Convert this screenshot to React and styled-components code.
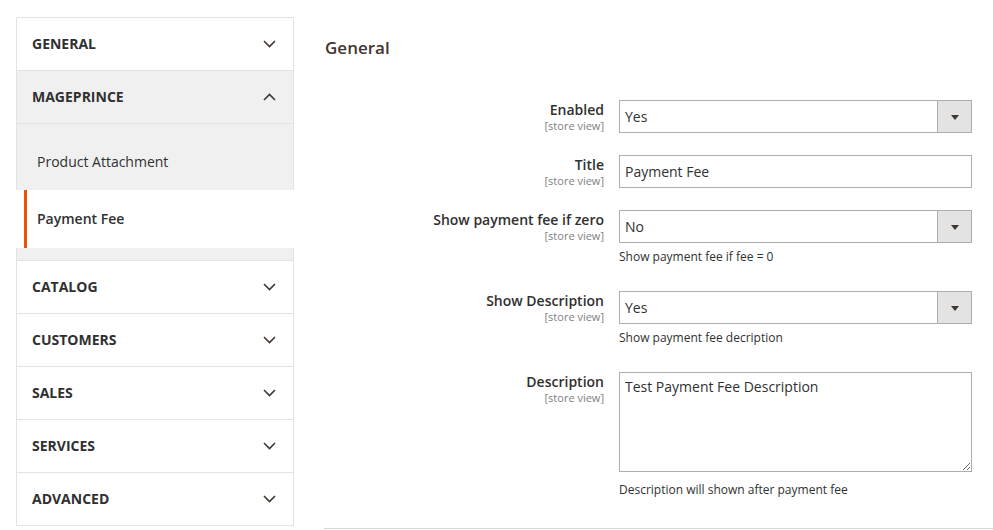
import React from "react";
import styled, { createGlobalStyle } from "styled-components";

const Global = createGlobalStyle`
  html, body { margin: 0; padding: 0; background: #fff; }
  body { font-family: "Open Sans", "Liberation Sans", sans-serif; color: #303030; }
  * { box-sizing: border-box; }
`;

const Page = styled.div`
  display: flex;
  align-items: flex-start;
  gap: 30px;
  padding: 17px 0 0 16px;
`;

const Nav = styled.nav`
  width: 278px;
  flex: none;
  border: 1px solid #e3e3e3;
  border-bottom: none;
`;

const NavTitle = styled.div`
  height: 53px;
  display: flex;
  align-items: center;
  justify-content: space-between;
  padding: 0 17px 1px 15px;
  border-bottom: 1px solid #e3e3e3;
  background: ${(p) => (p.$open ? "#f0f0f0" : "#fff")};
  font-size: 14px;
  font-weight: 700;
  text-transform: uppercase;
  color: #303030;
  cursor: pointer;
`;

const TitleText = styled.span`
  margin-bottom: 1px;
`;

const SubList = styled.ul`
  list-style: none;
  margin: 0;
  padding: 9px 0 12px;
  background: #f0f0f0;
  border-bottom: 1px solid #e3e3e3;
`;

const SubItem = styled.li`
  position: relative;
  display: flex;
  align-items: center;
  height: ${(p) => (p.$active ? "58px" : "57px")};
  padding-left: ${(p) => (p.$active ? "21px" : "20px")};
  padding-bottom: ${(p) => (p.$active ? "2px" : "0")};
  margin: ${(p) => (p.$active ? "0 -1px" : "0")};
  background: ${(p) => (p.$active ? "#fff" : "transparent")};
  font-size: 14px;
  font-weight: ${(p) => (p.$active ? 600 : 400)};
  color: #303030;
  &::before {
    content: "";
    display: ${(p) => (p.$active ? "block" : "none")};
    position: absolute;
    left: 8px;
    top: 0;
    bottom: 0;
    width: 3px;
    background: #eb5202;
  }
`;

const Main = styled.main`
  flex: 1;
  padding-top: 19px;
`;

const Heading = styled.h2`
  margin: 0 0 40px 1px;
  font-size: 17px;
  line-height: 24px;
  font-weight: 600;
  color: #41362f;
`;

const Fieldset = styled.div`
  padding-bottom: 3px;
  border-bottom: 1px solid #d6d6d6;
`;

const Row = styled.div`
  display: grid;
  grid-template-columns: 280px 353px;
  column-gap: 15px;
  padding-bottom: 22px;
`;

const LabelCell = styled.div`
  text-align: right;
  padding-top: 1px;
`;

const Label = styled.label`
  display: block;
  font-size: 14px;
  line-height: 18px;
  font-weight: 600;
  color: #303030;
`;

const Scope = styled.div`
  font-size: 11px;
  line-height: 13px;
  color: #808080;
`;

const Control = styled.div`
  display: flex;
  flex-direction: column;
`;

const SelectBox = styled.div`
  display: flex;
  height: 33px;
  border: 1px solid #adadad;
  background: #fff;
  font-size: 14px;
  color: #303030;
  cursor: pointer;
`;

const SelectValue = styled.span`
  flex: 1;
  display: flex;
  align-items: center;
  padding-left: 5px;
`;

const ArrowBox = styled.span`
  width: 34px;
  display: flex;
  align-items: center;
  justify-content: center;
  background: #e3e3e3;
  border-left: 1px solid #adadad;
  &::after {
    content: "";
    border-left: 4px solid transparent;
    border-right: 4px solid transparent;
    border-top: 5px solid #41362f;
    margin-top: 1px;
  }
`;

const TextInput = styled.input`
  width: 353px;
  height: 33px;
  border: 1px solid #adadad;
  border-radius: 0;
  padding: 0 5px;
  font-family: "Open Sans", "Liberation Sans", sans-serif;
  font-size: 14px;
  color: #303030;
  outline: none;
`;

const TextArea = styled.textarea`
  display: block;
  width: 353px;
  height: 100px;
  border: 1px solid #adadad;
  border-radius: 0;
  padding: 5px 5px;
  font-family: "Open Sans", "Liberation Sans", sans-serif;
  font-size: 14px;
  line-height: 18px;
  color: #303030;
  outline: none;
`;

const Note = styled.div`
  font-size: 12px;
  line-height: 16px;
  color: #303030;
  margin: ${(p) => (p.$far ? "10px" : "6px")} 0 ${(p) => (p.$far ? "5px" : "4px")};
`;

const Chevron = ({ up }) => (
  <svg width="13" height="8" viewBox="0 0 13 8" aria-hidden="true">
    <polyline
      points={up ? "1,7 6.5,1.5 12,7" : "1,1 6.5,6.5 12,1"}
      fill="none"
      stroke="#41362f"
      strokeWidth="1.6"
    />
  </svg>
);

const Select = ({ value }) => (
  <SelectBox role="combobox">
    <SelectValue>{value}</SelectValue>
    <ArrowBox />
  </SelectBox>
);

const Field = ({ label, children, note, far }) => (
  <Row>
    <LabelCell>
      <Label>{label}</Label>
      <Scope>[store view]</Scope>
    </LabelCell>
    <Control>
      {children}
      {note && <Note $far={far}>{note}</Note>}
    </Control>
  </Row>
);

const sections = ["Catalog", "Customers", "Sales", "Services", "Advanced"];

export default function App() {
  return (
    <>
      <Global />
      <Page>
        <Nav>
          <NavTitle>
            <TitleText>General</TitleText>
            <Chevron />
          </NavTitle>
          <NavTitle $open>
            <TitleText>Mageprince</TitleText>
            <Chevron up />
          </NavTitle>
          <SubList>
            <SubItem>Product Attachment</SubItem>
            <SubItem $active>Payment Fee</SubItem>
          </SubList>
          {sections.map((s) => (
            <NavTitle key={s}>
              <TitleText>{s}</TitleText>
              <Chevron />
            </NavTitle>
          ))}
        </Nav>
        <Main>
          <Heading>General</Heading>
          <Fieldset>
            <Field label="Enabled">
              <Select value="Yes" />
            </Field>
            <Field label="Title">
              <TextInput defaultValue="Payment Fee" />
            </Field>
            <Field label="Show payment fee if zero" note="Show payment fee if fee = 0">
              <Select value="No" />
            </Field>
            <Field label="Show Description" note="Show payment fee decription">
              <Select value="Yes" />
            </Field>
            <Field label="Description" note="Description will shown after payment fee" far>
              <TextArea defaultValue="Test Payment Fee Description" />
            </Field>
          </Fieldset>
        </Main>
      </Page>
    </>
  );
}
